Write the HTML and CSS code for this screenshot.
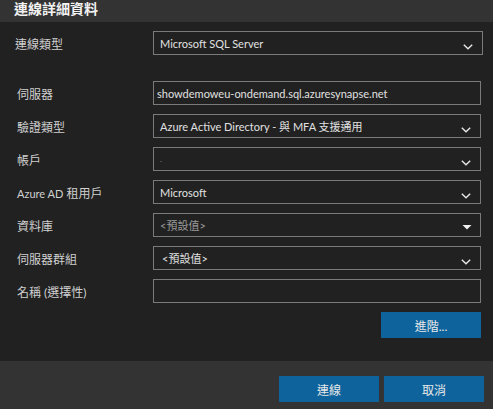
FILE: index.html
```html
<!DOCTYPE html>
<html lang="zh-Hant">
<head>
<meta charset="utf-8">
<title>連線詳細資料</title>
<link rel="stylesheet" href="styles.css">
</head>
<body>
<div class="dialog">
  <div class="header">連線詳細資料</div>
  <div class="body">
    <div class="row row-first">
      <div class="label label-first">連線類型</div>
      <div class="field field-wide select">
        <span class="value">Microsoft SQL Server</span>
        <svg class="chev" width="10" height="6" viewBox="0 0 10 6"><path d="M0.8 0.8 L5 4.8 L9.2 0.8" fill="none" stroke="#e8e8e8" stroke-width="1.4"/></svg>
      </div>
    </div>
    <div class="rows">
      <div class="row">
        <div class="label">伺服器</div>
        <div class="field"><span class="value value-input">showdemoweu-ondemand.sql.azuresynapse.net</span></div>
      </div>
      <div class="row">
        <div class="label">驗證類型</div>
        <div class="field select">
          <span class="value">Azure Active Directory - 與 MFA 支援通用</span>
          <svg class="chev" width="10" height="6" viewBox="0 0 10 6"><path d="M0.8 0.8 L5 4.8 L9.2 0.8" fill="none" stroke="#e8e8e8" stroke-width="1.4"/></svg>
        </div>
      </div>
      <div class="row">
        <div class="label">帳戶</div>
        <div class="field select">
          <span class="value value-dot">.</span>
          <svg class="chev" width="10" height="6" viewBox="0 0 10 6"><path d="M0.8 0.8 L5 4.8 L9.2 0.8" fill="none" stroke="#e8e8e8" stroke-width="1.4"/></svg>
        </div>
      </div>
      <div class="row">
        <div class="label"><span class="lat">Azure AD</span> 租用戶</div>
        <div class="field select">
          <span class="value">Microsoft</span>
          <svg class="chev" width="10" height="6" viewBox="0 0 10 6"><path d="M0.8 0.8 L5 4.8 L9.2 0.8" fill="none" stroke="#e8e8e8" stroke-width="1.4"/></svg>
        </div>
      </div>
      <div class="row">
        <div class="label">資料庫</div>
        <div class="field select">
          <span class="value value-muted">&lt;預設值&gt;</span>
          <svg class="tri" width="10" height="5" viewBox="0 0 10 5"><path d="M0.5 0 L9.5 0 L5 4.5 Z" fill="#f0f0f0"/></svg>
        </div>
      </div>
      <div class="row">
        <div class="label">伺服器群組</div>
        <div class="field select">
          <span class="value value-group">&lt;預設值&gt;</span>
          <svg class="chev" width="10" height="6" viewBox="0 0 10 6"><path d="M0.8 0.8 L5 4.8 L9.2 0.8" fill="none" stroke="#e8e8e8" stroke-width="1.4"/></svg>
        </div>
      </div>
      <div class="row">
        <div class="label">名稱 (選擇性)</div>
        <div class="field"></div>
      </div>
    </div>
    <div class="advanced-row">
      <button class="btn btn-advanced">進階...</button>
    </div>
  </div>
  <div class="footer">
    <button class="btn btn-footer">連線</button>
    <button class="btn btn-footer">取消</button>
  </div>
</div>
</body>
</html>
```

FILE: styles.css
```css
html, body {
  margin: 0;
  padding: 0;
  background: #212121;
}
body {
  font-family: "Lato", "Noto Sans CJK TC", sans-serif;
  font-size: 12px;
  color: #d8d8d8;
}
.dialog {
  width: 493px;
  height: 409px;
  display: flex;
  flex-direction: column;
  background: #212121;
}
.header {
  height: 22px;
  background: #333333;
  padding-left: 14px;
  font-size: 14px;
  font-weight: bold;
  line-height: 18px;
  color: #f2f2f2;
  box-sizing: border-box;
}
.body {
  flex: 1;
  padding-top: 9px;
}
.row {
  display: flex;
  align-items: center;
  height: 24px;
}
.row-first {
  margin-bottom: 26px;
}
.rows {
  display: flex;
  flex-direction: column;
  gap: 9px;
}
.label {
  width: 136px;
  padding-left: 17px;
  color: #d0d0d0;
  font-size: 12px;
}
.lat {
  font-size: 11px;
}
.label-first {
  padding-left: 15px;
  width: 138px;
}
.field {
  width: 328px;
  height: 24px;
  box-sizing: border-box;
  border: 1px solid #7a7a7a;
  display: flex;
  align-items: center;
  position: relative;
  background: #212121;
}
.field-wide {
  width: 330px;
}
.value {
  padding-left: 6px;
  font-size: 11px;
  color: #e0e0e0;
  white-space: nowrap;
}
.value-input {
  padding-left: 3px;
}
.value-muted {
  color: #9a9a9a;
}
.value-group {
  padding-left: 8px;
}
.value-dot {
  color: #8a8a8a;
  font-size: 8px;
}
.chev {
  position: absolute;
  right: 9px;
  top: 12px;
}
.tri {
  position: absolute;
  right: 8px;
  top: 11px;
}
.advanced-row {
  display: flex;
  justify-content: flex-end;
  padding-right: 12px;
  margin-top: 9px;
}
.btn {
  border: none;
  background: #0e639c;
  color: #e8e8e8;
  font-family: "Lato", "Noto Sans CJK TC", sans-serif;
  font-size: 12px;
  height: 26px;
  width: 100px;
  padding: 0;
  cursor: pointer;
}
.footer {
  height: 48px;
  background: #333333;
  display: flex;
  justify-content: flex-end;
  gap: 5px;
  padding-top: 15px;
  padding-right: 9px;
  box-sizing: border-box;
}
```
